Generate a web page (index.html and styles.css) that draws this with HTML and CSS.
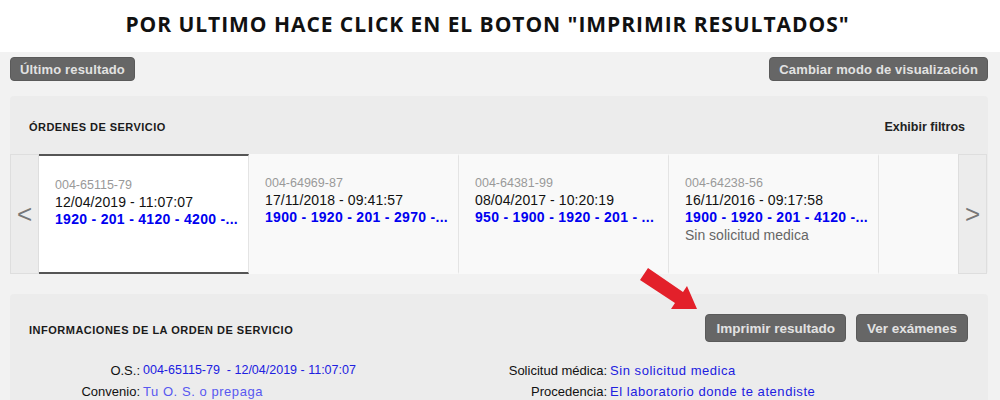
FILE: index.html
```html
<!DOCTYPE html>
<html lang="es">
<head>
  <meta charset="UTF-8" />
  <meta name="viewport" content="width=device-width, initial-scale=1.0"/>
  <title>Resultados</title>
  <link rel="stylesheet" href="styles.css">
</head>
<body>
  <header class="banner">
    <h1>POR ULTIMO HACE CLICK EN EL BOTON "IMPRIMIR RESULTADOS"</h1>
  </header>

  <main class="page">
    <div class="toolbar">
      <button class="btn">Último resultado</button>
      <button class="btn">Cambiar modo de visualización</button>
    </div>

    <section class="panel orders">
      <div class="orders-head">
        <h2 class="panel-title">ÓRDENES DE SERVICIO</h2>
        <a class="filters">Exhibir filtros</a>
      </div>

      <div class="carousel">
        <div class="nav">&lt;</div>
        <div class="track">
          <div class="card active">
            <div class="os-num">004-65115-79</div>
            <div class="os-date">12/04/2019 - 11:07:07</div>
            <div class="os-codes">1920 - 201 - 4120 - 4200 -...</div>
          </div>
          <div class="card">
            <div class="os-num">004-64969-87</div>
            <div class="os-date">17/11/2018 - 09:41:57</div>
            <div class="os-codes">1900 - 1920 - 201 - 2970 -...</div>
          </div>
          <div class="card">
            <div class="os-num">004-64381-99</div>
            <div class="os-date">08/04/2017 - 10:20:19</div>
            <div class="os-codes">950 - 1900 - 1920 - 201 - ...</div>
          </div>
          <div class="card">
            <div class="os-num">004-64238-56</div>
            <div class="os-date">16/11/2016 - 09:17:58</div>
            <div class="os-codes">1900 - 1920 - 201 - 4120 -...</div>
            <div class="os-note">Sin solicitud medica</div>
          </div>
          <div class="card"></div>
        </div>
        <div class="nav">&gt;</div>
      </div>
    </section>

    <section class="panel info">
      <div class="info-head">
        <h2 class="panel-title">INFORMACIONES DE LA ORDEN DE SERVICIO</h2>
        <div class="actions">
          <button class="btn btn-lg">Imprimir resultado</button>
          <button class="btn btn-lg">Ver exámenes</button>
        </div>
      </div>

      <div class="info-grid">
        <span class="label">O.S.:</span>
        <span class="value numeric">004-65115-79 &nbsp;- 12/04/2019 - 11:07:07</span>
        <span class="label">Solicitud médica:</span>
        <span class="value">Sin solicitud medica</span>

        <span class="label">Convenio:</span>
        <span class="value light">Tu O. S. o prepaga</span>
        <span class="label">Procedencia:</span>
        <span class="value">El laboratorio donde te atendiste</span>
      </div>
    </section>
  </main>

  <svg class="pointer" width="64" height="48" viewBox="0 0 64 48">
    <polygon points="12,4 47,28 51,22 61,45 35,45 39,39 4,16" fill="#e3202a"/>
  </svg>
</body>
</html>
```

FILE: styles.css
```css
body {
  margin: 0;
  font-family: "Liberation Sans", Arial, sans-serif;
  background: #f2f2f2;
  color: #111;
  height: 400px;
  overflow: hidden;
}
.banner {
  background: #fff;
  height: 52px;
}
.banner h1 {
  margin: 0;
  padding-right: 25px;
  font-family: "Open Sans", sans-serif;
  font-weight: 700;
  font-size: 21px;
  letter-spacing: 0.95px;
  line-height: 48px;
  text-align: center;
  color: #111;
}
.page {
  padding: 5px 12px 0 10px;
}
.toolbar {
  display: flex;
  justify-content: space-between;
  margin-bottom: 15px;
}
.btn {
  height: 24px;
  padding: 0 9px;
  background: #666;
  color: #e2e2e2;
  border: 1px solid #5a5a5a;
  border-radius: 4px;
  font-family: "Liberation Sans", Arial, sans-serif;
  font-weight: bold;
  font-size: 13px;
  letter-spacing: 0.15px;
  cursor: pointer;
}
.btn-lg {
  height: 28px;
  padding: 0 10px;
  font-size: 13.5px;
  letter-spacing: 0;
}
.panel {
  background: #ececec;
  border-radius: 4px;
}
.panel-title {
  margin: 0;
  font-size: 11px;
  font-weight: bold;
  letter-spacing: 0.45px;
  color: #1a1a1a;
}
.orders {
  margin-bottom: 20px;
}
.orders-head {
  height: 58px;
  padding: 4px 23px 0 19px;
  box-sizing: border-box;
  display: flex;
  justify-content: space-between;
  align-items: center;
}
.filters {
  font-size: 12.5px;
  font-weight: bold;
  color: #222;
}
.carousel {
  display: flex;
  height: 120px;
  margin-right: 1px;
}
.nav {
  flex: none;
  width: 29px;
  box-sizing: border-box;
  border: 1px solid #dedede;
  background: #ececec;
  color: #777;
  font-size: 26px;
  display: flex;
  align-items: center;
  justify-content: center;
}
.track {
  flex: 1;
  display: flex;
  overflow: hidden;
}
.card {
  flex: none;
  width: 210px;
  box-sizing: border-box;
  padding: 19px 10px 0 16px;
  background: #f9f9f9;
  border-top: 2px solid transparent;
  border-bottom: 2px solid transparent;
  border-right: 1px solid #e4e4e4;
  line-height: 17px;
  white-space: nowrap;
}
.card.active {
  background: #fff;
  border-top-color: #555;
  border-bottom-color: #555;
  padding-top: 21px;
}
.os-num {
  font-size: 12.5px;
  color: #999;
}
.os-date {
  font-size: 14px;
  letter-spacing: 0.1px;
  color: #111;
}
.os-codes {
  font-size: 14px;
  font-weight: bold;
  letter-spacing: 0.3px;
  color: #0000f0;
}
.os-note {
  font-size: 14px;
  color: #666;
  margin-top: 1px;
}
.info {
  padding: 20px 20px 20px 19px;
  min-height: 66px;
}
.info-head {
  display: flex;
  justify-content: space-between;
  align-items: center;
}
.info-head .panel-title {
  padding-top: 3px;
  letter-spacing: 0.5px;
}
.actions {
  display: flex;
  gap: 10px;
}
.info-grid {
  margin-top: 18px;
  display: grid;
  grid-template-columns: 111px 356px 111px 1fr;
  line-height: 21px;
  font-size: 13px;
}
.label {
  text-align: right;
  color: #111;
}
.value {
  padding-left: 3px;
  color: #2020e0;
  letter-spacing: 0.55px;
}
.value.numeric {
  font-size: 12.5px;
  letter-spacing: 0;
}
.value.light {
  color: #5858f0;
}
.pointer {
  position: absolute;
  left: 636px;
  top: 264px;
}
```
